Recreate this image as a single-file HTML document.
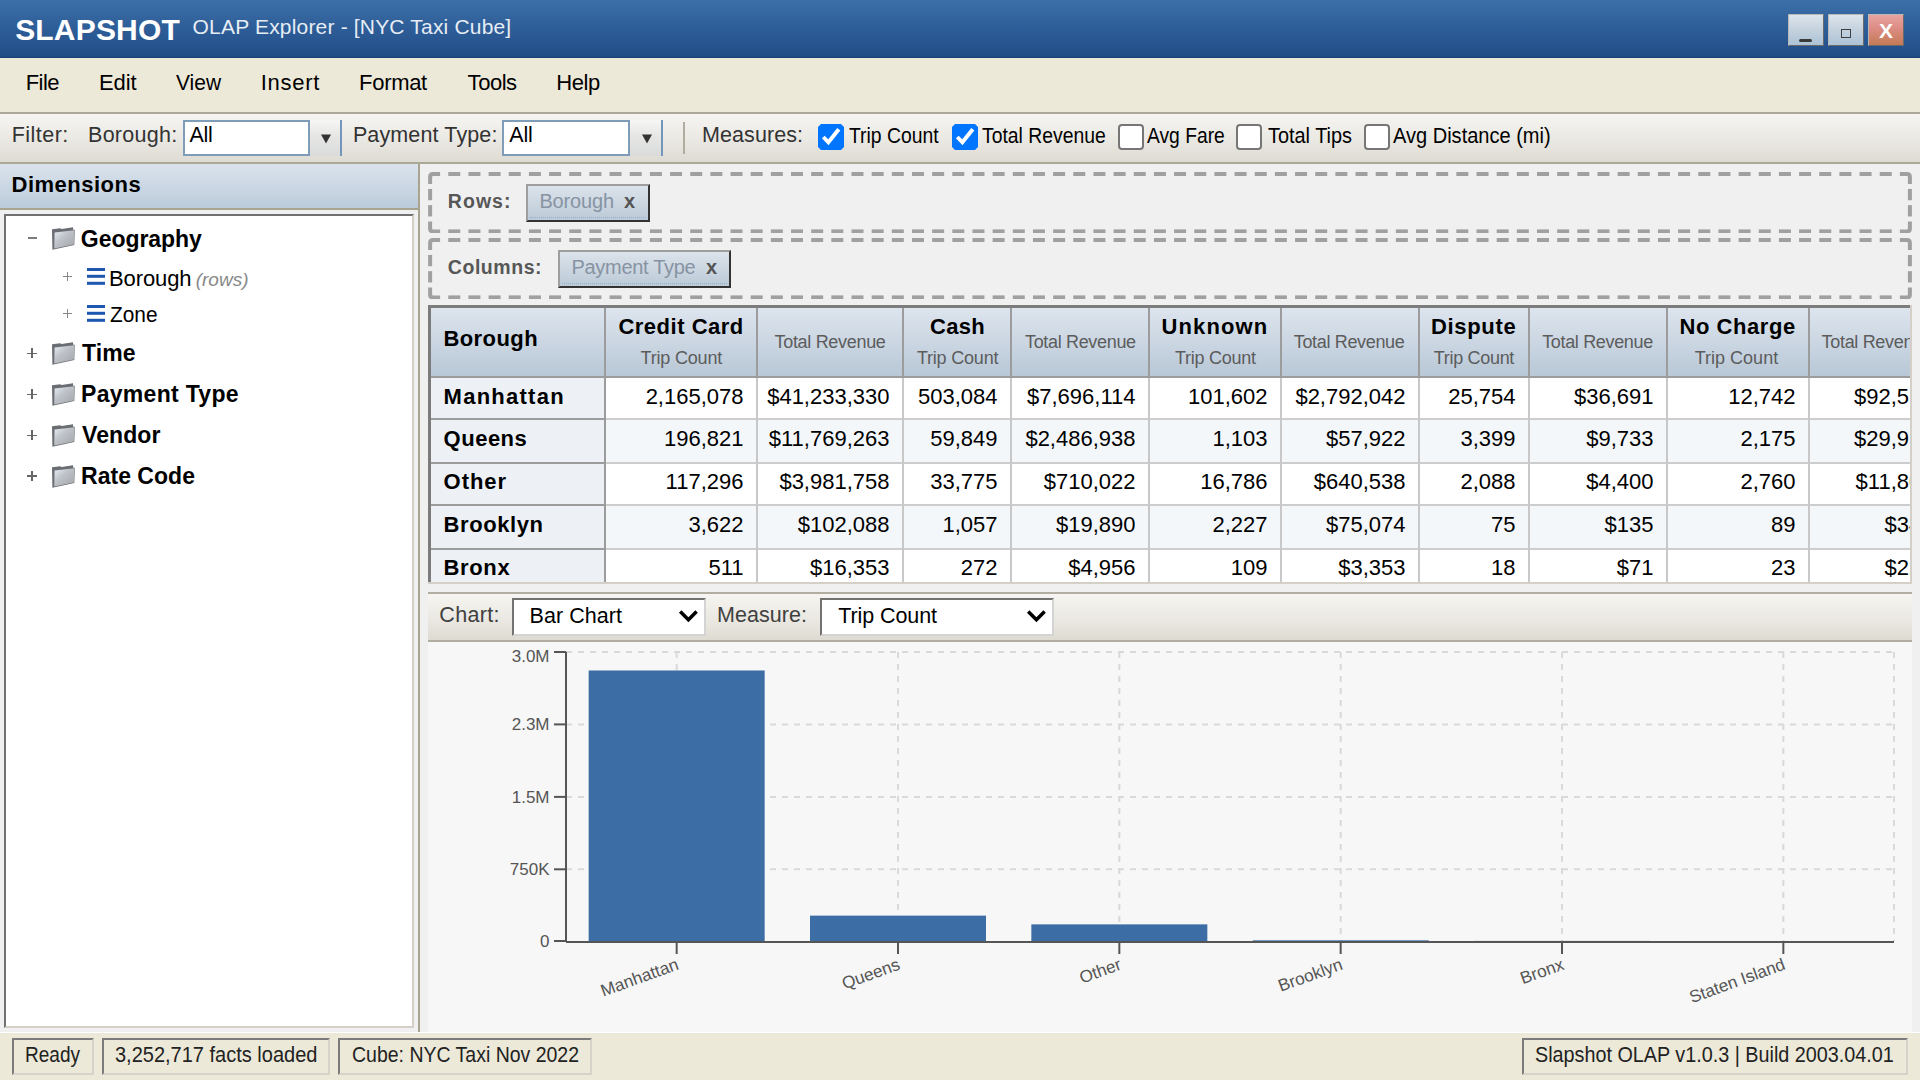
<!DOCTYPE html><html><head><meta charset="utf-8"><style>
html,body{margin:0;padding:0;width:1920px;height:1080px;overflow:hidden;background:#ece9d8;font-family:"Liberation Sans",sans-serif;}
.a{position:absolute;}
.t{position:absolute;line-height:1;white-space:nowrap;}
</style></head><body>
<div class="a" style="left:0px;top:0px;width:1920px;height:58px;background:linear-gradient(#3c6fa7,#2c5b96 55%,#204c85);"></div>
<div class="a" style="left:0px;top:57px;width:1920px;height:1px;background:#1a4175;"></div>
<div class="t" style="left:15.20px;top:15.00px;font-size:30px;color:#fff;font-weight:bold;letter-spacing:0.171px;">SLAPSHOT</div>
<div class="t" style="left:192.60px;top:16.00px;font-size:21px;color:#e6edf5;font-weight:normal;letter-spacing:0.18px;">OLAP Explorer - [NYC Taxi Cube]</div>
<div class="a" style="left:1788px;top:14px;width:36px;height:32px;background:linear-gradient(#dce4ec,#c6d3df 45%,#adc3d6);border:1px solid;border-color:#b8b8b8 #6a6a6a #6a6a6a #b8b8b8;box-sizing:border-box;"></div>
<div class="a" style="left:1828px;top:14px;width:36px;height:32px;background:linear-gradient(#dce4ec,#c6d3df 45%,#adc3d6);border:1px solid;border-color:#b8b8b8 #6a6a6a #6a6a6a #b8b8b8;box-sizing:border-box;"></div>
<div class="a" style="left:1868px;top:14px;width:36px;height:32px;background:linear-gradient(#e9a3a0,#dc8c84 45%,#c47a55);border:1px solid;border-color:#b8b8b8 #6a6a6a #6a6a6a #b8b8b8;box-sizing:border-box;"></div>
<div class="a" style="left:1799px;top:38.5px;width:13px;height:3px;background:#3a3a3a;border-radius:1.5px;"></div>
<div class="a" style="left:1841px;top:28.5px;width:10px;height:9.5px;border:1.6px solid #404040;box-sizing:border-box;"></div>
<div class="t" style="left:1586px;width:600px;text-align:center;top:20.00px;font-size:21px;color:#fff;font-weight:bold;">X</div>
<div class="a" style="left:0px;top:58px;width:1920px;height:54px;background:#ece9d8;"></div>
<div class="a" style="left:0px;top:112px;width:1920px;height:2px;background:#aca899;"></div>
<div class="t" style="left:25.70px;top:72.00px;font-size:22px;color:#000;font-weight:normal;letter-spacing:-0.567px;">File</div>
<div class="t" style="left:99.00px;top:72.00px;font-size:22px;color:#000;font-weight:normal;letter-spacing:-0.1px;">Edit</div>
<div class="t" style="left:176.00px;top:72.00px;font-size:22px;color:#000;font-weight:normal;letter-spacing:0px;transform:scaleX(0.9521);transform-origin:0 0;">View</div>
<div class="t" style="left:260.80px;top:72.00px;font-size:22px;color:#000;font-weight:normal;letter-spacing:0.7px;">Insert</div>
<div class="t" style="left:359.10px;top:72.00px;font-size:22px;color:#000;font-weight:normal;letter-spacing:-0.32px;">Format</div>
<div class="t" style="left:467.60px;top:72.00px;font-size:22px;color:#000;font-weight:normal;letter-spacing:-0.463px;">Tools</div>
<div class="t" style="left:556.30px;top:72.00px;font-size:22px;color:#000;font-weight:normal;letter-spacing:-0.467px;">Help</div>
<div class="a" style="left:0px;top:114px;width:1920px;height:48px;background:linear-gradient(#f6f5f2,#eae8e2 55%,#dedbd3);"></div>
<div class="a" style="left:0px;top:162px;width:1920px;height:2px;background:#aca899;"></div>
<div class="t" style="left:11.70px;top:125.00px;font-size:21.5px;color:#333;font-weight:normal;letter-spacing:0.467px;">Filter:</div>
<div class="t" style="left:88.00px;top:125.00px;font-size:21.5px;color:#333;font-weight:normal;letter-spacing:0.286px;">Borough:</div>
<div class="a" style="left:183px;top:120px;width:127px;height:36px;background:#fff;border:2px solid #7f9db9;box-sizing:border-box;"></div>
<div class="a" style="left:310px;top:120px;width:32px;height:36px;background:linear-gradient(#f6f6f4,#e6e6e4 45%,#d9dcdb);"></div>
<div class="a" style="left:340px;top:120px;width:2px;height:36px;background:#7496bb;"></div>
<div class="t" style="left:189.40px;top:125.00px;font-size:21.5px;color:#000;font-weight:normal;letter-spacing:-0.2px;">All</div>
<svg class="a" style="left:321.0px;top:134px" width="10" height="10"><path d="M0 0.5 H10 L5 9.5 Z" fill="#333"/></svg>
<div class="t" style="left:352.90px;top:125.00px;font-size:21.5px;color:#333;font-weight:normal;letter-spacing:0.125px;">Payment Type:</div>
<div class="a" style="left:502px;top:120px;width:128px;height:36px;background:#fff;border:2px solid #7f9db9;box-sizing:border-box;"></div>
<div class="a" style="left:630px;top:120px;width:33px;height:36px;background:linear-gradient(#f6f6f4,#e6e6e4 45%,#d9dcdb);"></div>
<div class="a" style="left:661px;top:120px;width:2px;height:36px;background:#7496bb;"></div>
<div class="t" style="left:509.30px;top:125.00px;font-size:21.5px;color:#000;font-weight:normal;letter-spacing:-0.2px;">All</div>
<svg class="a" style="left:641.5px;top:134px" width="10" height="10"><path d="M0 0.5 H10 L5 9.5 Z" fill="#333"/></svg>
<div class="a" style="left:683px;top:122px;width:2px;height:32px;background:#b0aca0;"></div>
<div class="t" style="left:702.00px;top:125.00px;font-size:21.5px;color:#333;font-weight:normal;letter-spacing:0.088px;">Measures:</div>
<svg class="a" style="left:818px;top:124px" width="26" height="26" viewBox="0 0 26 26"><path d="M3 0 H23 L26 3 V23 L23 26 H3 L0 23 V3 Z" fill="#0075ff"/><path d="M5.3 13 L10.4 18.3 L20.8 5.3" fill="none" stroke="#fff" stroke-width="3.9"/></svg>
<div class="t" style="left:849.00px;top:126.00px;font-size:21.5px;color:#000;font-weight:normal;letter-spacing:0px;transform:scaleX(0.9000);transform-origin:0 0;">Trip Count</div>
<svg class="a" style="left:952px;top:124px" width="26" height="26" viewBox="0 0 26 26"><path d="M3 0 H23 L26 3 V23 L23 26 H3 L0 23 V3 Z" fill="#0075ff"/><path d="M5.3 13 L10.4 18.3 L20.8 5.3" fill="none" stroke="#fff" stroke-width="3.9"/></svg>
<div class="t" style="left:981.70px;top:126.00px;font-size:21.5px;color:#000;font-weight:normal;letter-spacing:0px;transform:scaleX(0.9000);transform-origin:0 0;">Total Revenue</div>
<div class="a" style="left:1118px;top:124px;width:26px;height:26px;background:#fff;border:2px solid #767676;border-radius:4px;box-sizing:border-box;"></div>
<div class="t" style="left:1147.00px;top:126.00px;font-size:21.5px;color:#000;font-weight:normal;letter-spacing:0px;transform:scaleX(0.8953);transform-origin:0 0;">Avg Fare</div>
<div class="a" style="left:1236px;top:124px;width:26px;height:26px;background:#fff;border:2px solid #767676;border-radius:4px;box-sizing:border-box;"></div>
<div class="t" style="left:1267.50px;top:126.00px;font-size:21.5px;color:#000;font-weight:normal;letter-spacing:0px;transform:scaleX(0.9244);transform-origin:0 0;">Total Tips</div>
<div class="a" style="left:1364px;top:124px;width:26px;height:26px;background:#fff;border:2px solid #767676;border-radius:4px;box-sizing:border-box;"></div>
<div class="t" style="left:1393.00px;top:126.00px;font-size:21.5px;color:#000;font-weight:normal;letter-spacing:0px;transform:scaleX(0.9315);transform-origin:0 0;">Avg Distance (mi)</div>
<div class="a" style="left:0px;top:164px;width:418px;height:868px;background:#f0f0f0;"></div>
<div class="a" style="left:0px;top:164px;width:418px;height:44px;background:linear-gradient(#dae3ed,#bccbda);"></div>
<div class="a" style="left:0px;top:208px;width:418px;height:2px;background:#a8a490;"></div>
<div class="t" style="left:11.60px;top:174.00px;font-size:22px;color:#000;font-weight:bold;letter-spacing:0.489px;">Dimensions</div>
<div class="a" style="left:4px;top:214px;width:410px;height:814px;background:#fff;border:2px solid;border-color:#727070 #d4d0c8 #d4d0c8 #727070;box-sizing:border-box;"></div>
<div class="a" style="left:418px;top:164px;width:2px;height:868px;background:#a8a490;"></div>
<svg width="0" height="0" style="position:absolute"><defs><linearGradient id="fg" x1="0" y1="0" x2="1" y2="1"><stop offset="0" stop-color="#e8eef6"/><stop offset="0.4" stop-color="#c0c4ca"/><stop offset="1" stop-color="#a2a4a8"/></linearGradient></defs></svg>
<div class="a" style="left:27.5px;top:237px;width:9px;height:2px;background:#7c7c7c;"></div>
<svg class="a" style="left:51px;top:226px" width="24" height="24" viewBox="0 0 24 24"><path d="M1 3.2 L9.2 2.2 L10.6 3.1 L22 1.2 L22.2 3.7 L23.8 3.7 L23.3 18.9 L1.4 23.8 Z" fill="#6a6d72"/><path d="M3.6 6.6 L23.4 4.2 L22.9 18.4 L3.2 22.4 Z" fill="url(#fg)"/></svg>
<div class="t" style="left:80.80px;top:228.00px;font-size:23px;color:#000;font-weight:bold;letter-spacing:-0.05px;">Geography</div>
<div class="a" style="left:63px;top:275.85px;width:9px;height:1.3px;background:#888;"></div>
<div class="a" style="left:66.85px;top:272px;width:1.3px;height:9px;background:#888;"></div>
<svg class="a" style="left:87px;top:268px" width="19" height="17"><rect x="0" y="0" width="18" height="3" fill="#1d57b0"/><rect x="0" y="6.8" width="18" height="3" fill="#1d57b0"/><rect x="0" y="13.8" width="18" height="3" fill="#1d57b0"/></svg>
<div class="t" style="left:109.00px;top:268.00px;font-size:22px;color:#000;font-weight:normal;letter-spacing:-0.1px;">Borough</div>
<div class="t" style="left:195.70px;top:270.00px;font-size:19px;color:#888;font-weight:normal;letter-spacing:0px;font-style:italic">(rows)</div>
<div class="a" style="left:63px;top:312.85px;width:9px;height:1.3px;background:#888;"></div>
<div class="a" style="left:66.85px;top:309px;width:1.3px;height:9px;background:#888;"></div>
<svg class="a" style="left:87px;top:305px" width="19" height="17"><rect x="0" y="0" width="18" height="3" fill="#1d57b0"/><rect x="0" y="6.8" width="18" height="3" fill="#1d57b0"/><rect x="0" y="13.8" width="18" height="3" fill="#1d57b0"/></svg>
<div class="t" style="left:110.00px;top:304.00px;font-size:22px;color:#000;font-weight:normal;letter-spacing:0px;transform:scaleX(0.9480);transform-origin:0 0;">Zone</div>
<div class="a" style="left:27px;top:352.59999999999997px;width:10px;height:1.6px;background:#666;"></div>
<div class="a" style="left:31.2px;top:348.4px;width:1.6px;height:10px;background:#666;"></div>
<svg class="a" style="left:51px;top:341.4px" width="24" height="24" viewBox="0 0 24 24"><path d="M1 3.2 L9.2 2.2 L10.6 3.1 L22 1.2 L22.2 3.7 L23.8 3.7 L23.3 18.9 L1.4 23.8 Z" fill="#6a6d72"/><path d="M3.6 6.6 L23.4 4.2 L22.9 18.4 L3.2 22.4 Z" fill="url(#fg)"/></svg>
<div class="t" style="left:82.00px;top:342.00px;font-size:23px;color:#000;font-weight:bold;letter-spacing:0.1px;">Time</div>
<div class="a" style="left:27px;top:393.59999999999997px;width:10px;height:1.6px;background:#666;"></div>
<div class="a" style="left:31.2px;top:389.4px;width:1.6px;height:10px;background:#666;"></div>
<svg class="a" style="left:51px;top:382.4px" width="24" height="24" viewBox="0 0 24 24"><path d="M1 3.2 L9.2 2.2 L10.6 3.1 L22 1.2 L22.2 3.7 L23.8 3.7 L23.3 18.9 L1.4 23.8 Z" fill="#6a6d72"/><path d="M3.6 6.6 L23.4 4.2 L22.9 18.4 L3.2 22.4 Z" fill="url(#fg)"/></svg>
<div class="t" style="left:81.00px;top:383.00px;font-size:23px;color:#000;font-weight:bold;letter-spacing:0.3px;">Payment Type</div>
<div class="a" style="left:27px;top:434.5px;width:10px;height:1.6px;background:#666;"></div>
<div class="a" style="left:31.2px;top:430.3px;width:1.6px;height:10px;background:#666;"></div>
<svg class="a" style="left:51px;top:423.3px" width="24" height="24" viewBox="0 0 24 24"><path d="M1 3.2 L9.2 2.2 L10.6 3.1 L22 1.2 L22.2 3.7 L23.8 3.7 L23.3 18.9 L1.4 23.8 Z" fill="#6a6d72"/><path d="M3.6 6.6 L23.4 4.2 L22.9 18.4 L3.2 22.4 Z" fill="url(#fg)"/></svg>
<div class="t" style="left:82.00px;top:424.00px;font-size:23px;color:#000;font-weight:bold;letter-spacing:0.1px;">Vendor</div>
<div class="a" style="left:27px;top:475.4px;width:10px;height:1.6px;background:#666;"></div>
<div class="a" style="left:31.2px;top:471.2px;width:1.6px;height:10px;background:#666;"></div>
<svg class="a" style="left:51px;top:464.2px" width="24" height="24" viewBox="0 0 24 24"><path d="M1 3.2 L9.2 2.2 L10.6 3.1 L22 1.2 L22.2 3.7 L23.8 3.7 L23.3 18.9 L1.4 23.8 Z" fill="#6a6d72"/><path d="M3.6 6.6 L23.4 4.2 L22.9 18.4 L3.2 22.4 Z" fill="url(#fg)"/></svg>
<div class="t" style="left:81.00px;top:465.00px;font-size:23px;color:#000;font-weight:bold;letter-spacing:0.025px;">Rate Code</div>
<div class="a" style="left:420px;top:164px;width:1500px;height:868px;background:#f0f0f0;"></div>
<svg class="a" style="left:428px;top:172px" width="1484" height="61.4" viewBox="0 0 1484 61.4"><path d="M2.0 12 V5.0 Q2.0 2.0 5 2.0 H12" fill="none" stroke="#a0a0a0" stroke-width="4"/><path d="M1472 2.0 H1479 Q1482.0 2.0 1482.0 5 V12" fill="none" stroke="#a0a0a0" stroke-width="4"/><path d="M1482.0 49.4 V56.4 Q1482.0 59.4 1479 59.4 H1472" fill="none" stroke="#a0a0a0" stroke-width="4"/><path d="M12 59.4 H5 Q2.0 59.4 2.0 56.4 V49.4" fill="none" stroke="#a0a0a0" stroke-width="4"/><rect x="20.16" y="0" width="12" height="4" fill="#a0a0a0"/><rect x="20.16" y="57.4" width="12" height="4" fill="#a0a0a0"/><rect x="40.33" y="0" width="12" height="4" fill="#a0a0a0"/><rect x="40.33" y="57.4" width="12" height="4" fill="#a0a0a0"/><rect x="60.49" y="0" width="12" height="4" fill="#a0a0a0"/><rect x="60.49" y="57.4" width="12" height="4" fill="#a0a0a0"/><rect x="80.66" y="0" width="12" height="4" fill="#a0a0a0"/><rect x="80.66" y="57.4" width="12" height="4" fill="#a0a0a0"/><rect x="100.82" y="0" width="12" height="4" fill="#a0a0a0"/><rect x="100.82" y="57.4" width="12" height="4" fill="#a0a0a0"/><rect x="120.99" y="0" width="12" height="4" fill="#a0a0a0"/><rect x="120.99" y="57.4" width="12" height="4" fill="#a0a0a0"/><rect x="141.15" y="0" width="12" height="4" fill="#a0a0a0"/><rect x="141.15" y="57.4" width="12" height="4" fill="#a0a0a0"/><rect x="161.32" y="0" width="12" height="4" fill="#a0a0a0"/><rect x="161.32" y="57.4" width="12" height="4" fill="#a0a0a0"/><rect x="181.48" y="0" width="12" height="4" fill="#a0a0a0"/><rect x="181.48" y="57.4" width="12" height="4" fill="#a0a0a0"/><rect x="201.64" y="0" width="12" height="4" fill="#a0a0a0"/><rect x="201.64" y="57.4" width="12" height="4" fill="#a0a0a0"/><rect x="221.81" y="0" width="12" height="4" fill="#a0a0a0"/><rect x="221.81" y="57.4" width="12" height="4" fill="#a0a0a0"/><rect x="241.97" y="0" width="12" height="4" fill="#a0a0a0"/><rect x="241.97" y="57.4" width="12" height="4" fill="#a0a0a0"/><rect x="262.14" y="0" width="12" height="4" fill="#a0a0a0"/><rect x="262.14" y="57.4" width="12" height="4" fill="#a0a0a0"/><rect x="282.30" y="0" width="12" height="4" fill="#a0a0a0"/><rect x="282.30" y="57.4" width="12" height="4" fill="#a0a0a0"/><rect x="302.47" y="0" width="12" height="4" fill="#a0a0a0"/><rect x="302.47" y="57.4" width="12" height="4" fill="#a0a0a0"/><rect x="322.63" y="0" width="12" height="4" fill="#a0a0a0"/><rect x="322.63" y="57.4" width="12" height="4" fill="#a0a0a0"/><rect x="342.79" y="0" width="12" height="4" fill="#a0a0a0"/><rect x="342.79" y="57.4" width="12" height="4" fill="#a0a0a0"/><rect x="362.96" y="0" width="12" height="4" fill="#a0a0a0"/><rect x="362.96" y="57.4" width="12" height="4" fill="#a0a0a0"/><rect x="383.12" y="0" width="12" height="4" fill="#a0a0a0"/><rect x="383.12" y="57.4" width="12" height="4" fill="#a0a0a0"/><rect x="403.29" y="0" width="12" height="4" fill="#a0a0a0"/><rect x="403.29" y="57.4" width="12" height="4" fill="#a0a0a0"/><rect x="423.45" y="0" width="12" height="4" fill="#a0a0a0"/><rect x="423.45" y="57.4" width="12" height="4" fill="#a0a0a0"/><rect x="443.62" y="0" width="12" height="4" fill="#a0a0a0"/><rect x="443.62" y="57.4" width="12" height="4" fill="#a0a0a0"/><rect x="463.78" y="0" width="12" height="4" fill="#a0a0a0"/><rect x="463.78" y="57.4" width="12" height="4" fill="#a0a0a0"/><rect x="483.95" y="0" width="12" height="4" fill="#a0a0a0"/><rect x="483.95" y="57.4" width="12" height="4" fill="#a0a0a0"/><rect x="504.11" y="0" width="12" height="4" fill="#a0a0a0"/><rect x="504.11" y="57.4" width="12" height="4" fill="#a0a0a0"/><rect x="524.27" y="0" width="12" height="4" fill="#a0a0a0"/><rect x="524.27" y="57.4" width="12" height="4" fill="#a0a0a0"/><rect x="544.44" y="0" width="12" height="4" fill="#a0a0a0"/><rect x="544.44" y="57.4" width="12" height="4" fill="#a0a0a0"/><rect x="564.60" y="0" width="12" height="4" fill="#a0a0a0"/><rect x="564.60" y="57.4" width="12" height="4" fill="#a0a0a0"/><rect x="584.77" y="0" width="12" height="4" fill="#a0a0a0"/><rect x="584.77" y="57.4" width="12" height="4" fill="#a0a0a0"/><rect x="604.93" y="0" width="12" height="4" fill="#a0a0a0"/><rect x="604.93" y="57.4" width="12" height="4" fill="#a0a0a0"/><rect x="625.10" y="0" width="12" height="4" fill="#a0a0a0"/><rect x="625.10" y="57.4" width="12" height="4" fill="#a0a0a0"/><rect x="645.26" y="0" width="12" height="4" fill="#a0a0a0"/><rect x="645.26" y="57.4" width="12" height="4" fill="#a0a0a0"/><rect x="665.42" y="0" width="12" height="4" fill="#a0a0a0"/><rect x="665.42" y="57.4" width="12" height="4" fill="#a0a0a0"/><rect x="685.59" y="0" width="12" height="4" fill="#a0a0a0"/><rect x="685.59" y="57.4" width="12" height="4" fill="#a0a0a0"/><rect x="705.75" y="0" width="12" height="4" fill="#a0a0a0"/><rect x="705.75" y="57.4" width="12" height="4" fill="#a0a0a0"/><rect x="725.92" y="0" width="12" height="4" fill="#a0a0a0"/><rect x="725.92" y="57.4" width="12" height="4" fill="#a0a0a0"/><rect x="746.08" y="0" width="12" height="4" fill="#a0a0a0"/><rect x="746.08" y="57.4" width="12" height="4" fill="#a0a0a0"/><rect x="766.25" y="0" width="12" height="4" fill="#a0a0a0"/><rect x="766.25" y="57.4" width="12" height="4" fill="#a0a0a0"/><rect x="786.41" y="0" width="12" height="4" fill="#a0a0a0"/><rect x="786.41" y="57.4" width="12" height="4" fill="#a0a0a0"/><rect x="806.58" y="0" width="12" height="4" fill="#a0a0a0"/><rect x="806.58" y="57.4" width="12" height="4" fill="#a0a0a0"/><rect x="826.74" y="0" width="12" height="4" fill="#a0a0a0"/><rect x="826.74" y="57.4" width="12" height="4" fill="#a0a0a0"/><rect x="846.90" y="0" width="12" height="4" fill="#a0a0a0"/><rect x="846.90" y="57.4" width="12" height="4" fill="#a0a0a0"/><rect x="867.07" y="0" width="12" height="4" fill="#a0a0a0"/><rect x="867.07" y="57.4" width="12" height="4" fill="#a0a0a0"/><rect x="887.23" y="0" width="12" height="4" fill="#a0a0a0"/><rect x="887.23" y="57.4" width="12" height="4" fill="#a0a0a0"/><rect x="907.40" y="0" width="12" height="4" fill="#a0a0a0"/><rect x="907.40" y="57.4" width="12" height="4" fill="#a0a0a0"/><rect x="927.56" y="0" width="12" height="4" fill="#a0a0a0"/><rect x="927.56" y="57.4" width="12" height="4" fill="#a0a0a0"/><rect x="947.73" y="0" width="12" height="4" fill="#a0a0a0"/><rect x="947.73" y="57.4" width="12" height="4" fill="#a0a0a0"/><rect x="967.89" y="0" width="12" height="4" fill="#a0a0a0"/><rect x="967.89" y="57.4" width="12" height="4" fill="#a0a0a0"/><rect x="988.05" y="0" width="12" height="4" fill="#a0a0a0"/><rect x="988.05" y="57.4" width="12" height="4" fill="#a0a0a0"/><rect x="1008.22" y="0" width="12" height="4" fill="#a0a0a0"/><rect x="1008.22" y="57.4" width="12" height="4" fill="#a0a0a0"/><rect x="1028.38" y="0" width="12" height="4" fill="#a0a0a0"/><rect x="1028.38" y="57.4" width="12" height="4" fill="#a0a0a0"/><rect x="1048.55" y="0" width="12" height="4" fill="#a0a0a0"/><rect x="1048.55" y="57.4" width="12" height="4" fill="#a0a0a0"/><rect x="1068.71" y="0" width="12" height="4" fill="#a0a0a0"/><rect x="1068.71" y="57.4" width="12" height="4" fill="#a0a0a0"/><rect x="1088.88" y="0" width="12" height="4" fill="#a0a0a0"/><rect x="1088.88" y="57.4" width="12" height="4" fill="#a0a0a0"/><rect x="1109.04" y="0" width="12" height="4" fill="#a0a0a0"/><rect x="1109.04" y="57.4" width="12" height="4" fill="#a0a0a0"/><rect x="1129.21" y="0" width="12" height="4" fill="#a0a0a0"/><rect x="1129.21" y="57.4" width="12" height="4" fill="#a0a0a0"/><rect x="1149.37" y="0" width="12" height="4" fill="#a0a0a0"/><rect x="1149.37" y="57.4" width="12" height="4" fill="#a0a0a0"/><rect x="1169.53" y="0" width="12" height="4" fill="#a0a0a0"/><rect x="1169.53" y="57.4" width="12" height="4" fill="#a0a0a0"/><rect x="1189.70" y="0" width="12" height="4" fill="#a0a0a0"/><rect x="1189.70" y="57.4" width="12" height="4" fill="#a0a0a0"/><rect x="1209.86" y="0" width="12" height="4" fill="#a0a0a0"/><rect x="1209.86" y="57.4" width="12" height="4" fill="#a0a0a0"/><rect x="1230.03" y="0" width="12" height="4" fill="#a0a0a0"/><rect x="1230.03" y="57.4" width="12" height="4" fill="#a0a0a0"/><rect x="1250.19" y="0" width="12" height="4" fill="#a0a0a0"/><rect x="1250.19" y="57.4" width="12" height="4" fill="#a0a0a0"/><rect x="1270.36" y="0" width="12" height="4" fill="#a0a0a0"/><rect x="1270.36" y="57.4" width="12" height="4" fill="#a0a0a0"/><rect x="1290.52" y="0" width="12" height="4" fill="#a0a0a0"/><rect x="1290.52" y="57.4" width="12" height="4" fill="#a0a0a0"/><rect x="1310.68" y="0" width="12" height="4" fill="#a0a0a0"/><rect x="1310.68" y="57.4" width="12" height="4" fill="#a0a0a0"/><rect x="1330.85" y="0" width="12" height="4" fill="#a0a0a0"/><rect x="1330.85" y="57.4" width="12" height="4" fill="#a0a0a0"/><rect x="1351.01" y="0" width="12" height="4" fill="#a0a0a0"/><rect x="1351.01" y="57.4" width="12" height="4" fill="#a0a0a0"/><rect x="1371.18" y="0" width="12" height="4" fill="#a0a0a0"/><rect x="1371.18" y="57.4" width="12" height="4" fill="#a0a0a0"/><rect x="1391.34" y="0" width="12" height="4" fill="#a0a0a0"/><rect x="1391.34" y="57.4" width="12" height="4" fill="#a0a0a0"/><rect x="1411.51" y="0" width="12" height="4" fill="#a0a0a0"/><rect x="1411.51" y="57.4" width="12" height="4" fill="#a0a0a0"/><rect x="1431.67" y="0" width="12" height="4" fill="#a0a0a0"/><rect x="1431.67" y="57.4" width="12" height="4" fill="#a0a0a0"/><rect x="1451.84" y="0" width="12" height="4" fill="#a0a0a0"/><rect x="1451.84" y="57.4" width="12" height="4" fill="#a0a0a0"/><rect x="0" y="16.93" width="4" height="11.3" fill="#a0a0a0"/><rect x="1480" y="16.93" width="4" height="11.3" fill="#a0a0a0"/><rect x="0" y="33.17" width="4" height="11.3" fill="#a0a0a0"/><rect x="1480" y="33.17" width="4" height="11.3" fill="#a0a0a0"/></svg>
<div class="t" style="left:447.80px;top:192.00px;font-size:19.5px;color:#575757;font-weight:bold;letter-spacing:1.05px;">Rows:</div>
<div class="a" style="left:526.3px;top:184.4px;width:123.5px;height:38px;background:linear-gradient(#dbe3eb,#bccad7);border:2px solid;border-color:#9e9e9e #333 #333 #9e9e9e;box-sizing:border-box;"></div>
<div class="a" style="left:530.3px;top:216.9px;width:115.5px;height:0;border-top:1px dotted #8fb0d0;"></div>
<div class="t" style="left:539.40px;top:191.00px;font-size:20px;color:#8793a2;font-weight:normal;letter-spacing:-0.167px;">Borough</div>
<div class="t" style="left:624.00px;top:191.00px;font-size:20px;color:#555;font-weight:bold;letter-spacing:0px;">x</div>
<svg class="a" style="left:428px;top:238px" width="1484" height="61.4" viewBox="0 0 1484 61.4"><path d="M2.0 12 V5.0 Q2.0 2.0 5 2.0 H12" fill="none" stroke="#a0a0a0" stroke-width="4"/><path d="M1472 2.0 H1479 Q1482.0 2.0 1482.0 5 V12" fill="none" stroke="#a0a0a0" stroke-width="4"/><path d="M1482.0 49.4 V56.4 Q1482.0 59.4 1479 59.4 H1472" fill="none" stroke="#a0a0a0" stroke-width="4"/><path d="M12 59.4 H5 Q2.0 59.4 2.0 56.4 V49.4" fill="none" stroke="#a0a0a0" stroke-width="4"/><rect x="20.16" y="0" width="12" height="4" fill="#a0a0a0"/><rect x="20.16" y="57.4" width="12" height="4" fill="#a0a0a0"/><rect x="40.33" y="0" width="12" height="4" fill="#a0a0a0"/><rect x="40.33" y="57.4" width="12" height="4" fill="#a0a0a0"/><rect x="60.49" y="0" width="12" height="4" fill="#a0a0a0"/><rect x="60.49" y="57.4" width="12" height="4" fill="#a0a0a0"/><rect x="80.66" y="0" width="12" height="4" fill="#a0a0a0"/><rect x="80.66" y="57.4" width="12" height="4" fill="#a0a0a0"/><rect x="100.82" y="0" width="12" height="4" fill="#a0a0a0"/><rect x="100.82" y="57.4" width="12" height="4" fill="#a0a0a0"/><rect x="120.99" y="0" width="12" height="4" fill="#a0a0a0"/><rect x="120.99" y="57.4" width="12" height="4" fill="#a0a0a0"/><rect x="141.15" y="0" width="12" height="4" fill="#a0a0a0"/><rect x="141.15" y="57.4" width="12" height="4" fill="#a0a0a0"/><rect x="161.32" y="0" width="12" height="4" fill="#a0a0a0"/><rect x="161.32" y="57.4" width="12" height="4" fill="#a0a0a0"/><rect x="181.48" y="0" width="12" height="4" fill="#a0a0a0"/><rect x="181.48" y="57.4" width="12" height="4" fill="#a0a0a0"/><rect x="201.64" y="0" width="12" height="4" fill="#a0a0a0"/><rect x="201.64" y="57.4" width="12" height="4" fill="#a0a0a0"/><rect x="221.81" y="0" width="12" height="4" fill="#a0a0a0"/><rect x="221.81" y="57.4" width="12" height="4" fill="#a0a0a0"/><rect x="241.97" y="0" width="12" height="4" fill="#a0a0a0"/><rect x="241.97" y="57.4" width="12" height="4" fill="#a0a0a0"/><rect x="262.14" y="0" width="12" height="4" fill="#a0a0a0"/><rect x="262.14" y="57.4" width="12" height="4" fill="#a0a0a0"/><rect x="282.30" y="0" width="12" height="4" fill="#a0a0a0"/><rect x="282.30" y="57.4" width="12" height="4" fill="#a0a0a0"/><rect x="302.47" y="0" width="12" height="4" fill="#a0a0a0"/><rect x="302.47" y="57.4" width="12" height="4" fill="#a0a0a0"/><rect x="322.63" y="0" width="12" height="4" fill="#a0a0a0"/><rect x="322.63" y="57.4" width="12" height="4" fill="#a0a0a0"/><rect x="342.79" y="0" width="12" height="4" fill="#a0a0a0"/><rect x="342.79" y="57.4" width="12" height="4" fill="#a0a0a0"/><rect x="362.96" y="0" width="12" height="4" fill="#a0a0a0"/><rect x="362.96" y="57.4" width="12" height="4" fill="#a0a0a0"/><rect x="383.12" y="0" width="12" height="4" fill="#a0a0a0"/><rect x="383.12" y="57.4" width="12" height="4" fill="#a0a0a0"/><rect x="403.29" y="0" width="12" height="4" fill="#a0a0a0"/><rect x="403.29" y="57.4" width="12" height="4" fill="#a0a0a0"/><rect x="423.45" y="0" width="12" height="4" fill="#a0a0a0"/><rect x="423.45" y="57.4" width="12" height="4" fill="#a0a0a0"/><rect x="443.62" y="0" width="12" height="4" fill="#a0a0a0"/><rect x="443.62" y="57.4" width="12" height="4" fill="#a0a0a0"/><rect x="463.78" y="0" width="12" height="4" fill="#a0a0a0"/><rect x="463.78" y="57.4" width="12" height="4" fill="#a0a0a0"/><rect x="483.95" y="0" width="12" height="4" fill="#a0a0a0"/><rect x="483.95" y="57.4" width="12" height="4" fill="#a0a0a0"/><rect x="504.11" y="0" width="12" height="4" fill="#a0a0a0"/><rect x="504.11" y="57.4" width="12" height="4" fill="#a0a0a0"/><rect x="524.27" y="0" width="12" height="4" fill="#a0a0a0"/><rect x="524.27" y="57.4" width="12" height="4" fill="#a0a0a0"/><rect x="544.44" y="0" width="12" height="4" fill="#a0a0a0"/><rect x="544.44" y="57.4" width="12" height="4" fill="#a0a0a0"/><rect x="564.60" y="0" width="12" height="4" fill="#a0a0a0"/><rect x="564.60" y="57.4" width="12" height="4" fill="#a0a0a0"/><rect x="584.77" y="0" width="12" height="4" fill="#a0a0a0"/><rect x="584.77" y="57.4" width="12" height="4" fill="#a0a0a0"/><rect x="604.93" y="0" width="12" height="4" fill="#a0a0a0"/><rect x="604.93" y="57.4" width="12" height="4" fill="#a0a0a0"/><rect x="625.10" y="0" width="12" height="4" fill="#a0a0a0"/><rect x="625.10" y="57.4" width="12" height="4" fill="#a0a0a0"/><rect x="645.26" y="0" width="12" height="4" fill="#a0a0a0"/><rect x="645.26" y="57.4" width="12" height="4" fill="#a0a0a0"/><rect x="665.42" y="0" width="12" height="4" fill="#a0a0a0"/><rect x="665.42" y="57.4" width="12" height="4" fill="#a0a0a0"/><rect x="685.59" y="0" width="12" height="4" fill="#a0a0a0"/><rect x="685.59" y="57.4" width="12" height="4" fill="#a0a0a0"/><rect x="705.75" y="0" width="12" height="4" fill="#a0a0a0"/><rect x="705.75" y="57.4" width="12" height="4" fill="#a0a0a0"/><rect x="725.92" y="0" width="12" height="4" fill="#a0a0a0"/><rect x="725.92" y="57.4" width="12" height="4" fill="#a0a0a0"/><rect x="746.08" y="0" width="12" height="4" fill="#a0a0a0"/><rect x="746.08" y="57.4" width="12" height="4" fill="#a0a0a0"/><rect x="766.25" y="0" width="12" height="4" fill="#a0a0a0"/><rect x="766.25" y="57.4" width="12" height="4" fill="#a0a0a0"/><rect x="786.41" y="0" width="12" height="4" fill="#a0a0a0"/><rect x="786.41" y="57.4" width="12" height="4" fill="#a0a0a0"/><rect x="806.58" y="0" width="12" height="4" fill="#a0a0a0"/><rect x="806.58" y="57.4" width="12" height="4" fill="#a0a0a0"/><rect x="826.74" y="0" width="12" height="4" fill="#a0a0a0"/><rect x="826.74" y="57.4" width="12" height="4" fill="#a0a0a0"/><rect x="846.90" y="0" width="12" height="4" fill="#a0a0a0"/><rect x="846.90" y="57.4" width="12" height="4" fill="#a0a0a0"/><rect x="867.07" y="0" width="12" height="4" fill="#a0a0a0"/><rect x="867.07" y="57.4" width="12" height="4" fill="#a0a0a0"/><rect x="887.23" y="0" width="12" height="4" fill="#a0a0a0"/><rect x="887.23" y="57.4" width="12" height="4" fill="#a0a0a0"/><rect x="907.40" y="0" width="12" height="4" fill="#a0a0a0"/><rect x="907.40" y="57.4" width="12" height="4" fill="#a0a0a0"/><rect x="927.56" y="0" width="12" height="4" fill="#a0a0a0"/><rect x="927.56" y="57.4" width="12" height="4" fill="#a0a0a0"/><rect x="947.73" y="0" width="12" height="4" fill="#a0a0a0"/><rect x="947.73" y="57.4" width="12" height="4" fill="#a0a0a0"/><rect x="967.89" y="0" width="12" height="4" fill="#a0a0a0"/><rect x="967.89" y="57.4" width="12" height="4" fill="#a0a0a0"/><rect x="988.05" y="0" width="12" height="4" fill="#a0a0a0"/><rect x="988.05" y="57.4" width="12" height="4" fill="#a0a0a0"/><rect x="1008.22" y="0" width="12" height="4" fill="#a0a0a0"/><rect x="1008.22" y="57.4" width="12" height="4" fill="#a0a0a0"/><rect x="1028.38" y="0" width="12" height="4" fill="#a0a0a0"/><rect x="1028.38" y="57.4" width="12" height="4" fill="#a0a0a0"/><rect x="1048.55" y="0" width="12" height="4" fill="#a0a0a0"/><rect x="1048.55" y="57.4" width="12" height="4" fill="#a0a0a0"/><rect x="1068.71" y="0" width="12" height="4" fill="#a0a0a0"/><rect x="1068.71" y="57.4" width="12" height="4" fill="#a0a0a0"/><rect x="1088.88" y="0" width="12" height="4" fill="#a0a0a0"/><rect x="1088.88" y="57.4" width="12" height="4" fill="#a0a0a0"/><rect x="1109.04" y="0" width="12" height="4" fill="#a0a0a0"/><rect x="1109.04" y="57.4" width="12" height="4" fill="#a0a0a0"/><rect x="1129.21" y="0" width="12" height="4" fill="#a0a0a0"/><rect x="1129.21" y="57.4" width="12" height="4" fill="#a0a0a0"/><rect x="1149.37" y="0" width="12" height="4" fill="#a0a0a0"/><rect x="1149.37" y="57.4" width="12" height="4" fill="#a0a0a0"/><rect x="1169.53" y="0" width="12" height="4" fill="#a0a0a0"/><rect x="1169.53" y="57.4" width="12" height="4" fill="#a0a0a0"/><rect x="1189.70" y="0" width="12" height="4" fill="#a0a0a0"/><rect x="1189.70" y="57.4" width="12" height="4" fill="#a0a0a0"/><rect x="1209.86" y="0" width="12" height="4" fill="#a0a0a0"/><rect x="1209.86" y="57.4" width="12" height="4" fill="#a0a0a0"/><rect x="1230.03" y="0" width="12" height="4" fill="#a0a0a0"/><rect x="1230.03" y="57.4" width="12" height="4" fill="#a0a0a0"/><rect x="1250.19" y="0" width="12" height="4" fill="#a0a0a0"/><rect x="1250.19" y="57.4" width="12" height="4" fill="#a0a0a0"/><rect x="1270.36" y="0" width="12" height="4" fill="#a0a0a0"/><rect x="1270.36" y="57.4" width="12" height="4" fill="#a0a0a0"/><rect x="1290.52" y="0" width="12" height="4" fill="#a0a0a0"/><rect x="1290.52" y="57.4" width="12" height="4" fill="#a0a0a0"/><rect x="1310.68" y="0" width="12" height="4" fill="#a0a0a0"/><rect x="1310.68" y="57.4" width="12" height="4" fill="#a0a0a0"/><rect x="1330.85" y="0" width="12" height="4" fill="#a0a0a0"/><rect x="1330.85" y="57.4" width="12" height="4" fill="#a0a0a0"/><rect x="1351.01" y="0" width="12" height="4" fill="#a0a0a0"/><rect x="1351.01" y="57.4" width="12" height="4" fill="#a0a0a0"/><rect x="1371.18" y="0" width="12" height="4" fill="#a0a0a0"/><rect x="1371.18" y="57.4" width="12" height="4" fill="#a0a0a0"/><rect x="1391.34" y="0" width="12" height="4" fill="#a0a0a0"/><rect x="1391.34" y="57.4" width="12" height="4" fill="#a0a0a0"/><rect x="1411.51" y="0" width="12" height="4" fill="#a0a0a0"/><rect x="1411.51" y="57.4" width="12" height="4" fill="#a0a0a0"/><rect x="1431.67" y="0" width="12" height="4" fill="#a0a0a0"/><rect x="1431.67" y="57.4" width="12" height="4" fill="#a0a0a0"/><rect x="1451.84" y="0" width="12" height="4" fill="#a0a0a0"/><rect x="1451.84" y="57.4" width="12" height="4" fill="#a0a0a0"/><rect x="0" y="16.93" width="4" height="11.3" fill="#a0a0a0"/><rect x="1480" y="16.93" width="4" height="11.3" fill="#a0a0a0"/><rect x="0" y="33.17" width="4" height="11.3" fill="#a0a0a0"/><rect x="1480" y="33.17" width="4" height="11.3" fill="#a0a0a0"/></svg>
<div class="t" style="left:447.80px;top:258.00px;font-size:19.5px;color:#575757;font-weight:bold;letter-spacing:0.543px;">Columns:</div>
<div class="a" style="left:558.4px;top:250.4px;width:173px;height:38px;background:linear-gradient(#dbe3eb,#bccad7);border:2px solid;border-color:#9e9e9e #333 #333 #9e9e9e;box-sizing:border-box;"></div>
<div class="a" style="left:562.4px;top:282.9px;width:165px;height:0;border-top:1px dotted #8fb0d0;"></div>
<div class="t" style="left:571.50px;top:257.00px;font-size:20px;color:#8793a2;font-weight:normal;letter-spacing:-0.309px;">Payment Type</div>
<div class="t" style="left:705.90px;top:257.00px;font-size:20px;color:#555;font-weight:bold;letter-spacing:0px;">x</div>
<div class="a" style="left:428px;top:305px;width:1482px;height:277px;overflow:hidden;background:#f0f0f0;">
<div class="a" style="left:0;top:0;width:1484px;height:3px;background:#7c7c7c;"></div>
<div class="a" style="left:0;top:0;width:3px;height:279px;background:#7c7c7c;"></div>
<div class="a" style="left:3px;top:3px;width:1600px;height:69px;background:linear-gradient(#dde5ee,#b8c7d6);"></div>
<div class="a" style="left:3px;top:72px;width:174px;height:300px;background:#edf1f6;"></div>
<div class="a" style="left:178px;top:72px;width:1500px;height:42px;background:#fff;"></div>
<div class="a" style="left:178px;top:114px;width:1500px;height:43.60000000000002px;background:#f4f7fa;"></div>
<div class="a" style="left:178px;top:157.60000000000002px;width:1500px;height:42.0px;background:#fff;"></div>
<div class="a" style="left:178px;top:199.60000000000002px;width:1500px;height:44.39999999999998px;background:#f4f7fa;"></div>
<div class="a" style="left:178px;top:244px;width:1500px;height:51px;background:#fff;"></div>
<div class="a" style="left:3px;top:71px;width:1600px;height:2px;background:#9c9c9c;"></div>
<div class="a" style="left:3px;top:113px;width:174px;height:2px;background:#9c9c9c;"></div>
<div class="a" style="left:178px;top:113px;width:1500px;height:2px;background:#cdcdcd;"></div>
<div class="a" style="left:3px;top:156.60000000000002px;width:174px;height:2px;background:#9c9c9c;"></div>
<div class="a" style="left:178px;top:156.60000000000002px;width:1500px;height:2px;background:#cdcdcd;"></div>
<div class="a" style="left:3px;top:198.60000000000002px;width:174px;height:2px;background:#9c9c9c;"></div>
<div class="a" style="left:178px;top:198.60000000000002px;width:1500px;height:2px;background:#cdcdcd;"></div>
<div class="a" style="left:3px;top:243px;width:174px;height:2px;background:#9c9c9c;"></div>
<div class="a" style="left:178px;top:243px;width:1500px;height:2px;background:#cdcdcd;"></div>
<div class="a" style="left:176px;top:73px;width:2px;height:300px;background:#9c9c9c;"></div>
<div class="a" style="left:176px;top:3px;width:2px;height:69px;background:#9c9c9c;"></div>
<div class="a" style="left:328px;top:73px;width:2px;height:300px;background:#c8c8c8;"></div>
<div class="a" style="left:328px;top:3px;width:2px;height:69px;background:#9c9c9c;"></div>
<div class="a" style="left:474px;top:73px;width:2px;height:300px;background:#c8c8c8;"></div>
<div class="a" style="left:474px;top:3px;width:2px;height:69px;background:#9c9c9c;"></div>
<div class="a" style="left:582px;top:73px;width:2px;height:300px;background:#c8c8c8;"></div>
<div class="a" style="left:582px;top:3px;width:2px;height:69px;background:#9c9c9c;"></div>
<div class="a" style="left:720px;top:73px;width:2px;height:300px;background:#c8c8c8;"></div>
<div class="a" style="left:720px;top:3px;width:2px;height:69px;background:#9c9c9c;"></div>
<div class="a" style="left:852px;top:73px;width:2px;height:300px;background:#c8c8c8;"></div>
<div class="a" style="left:852px;top:3px;width:2px;height:69px;background:#9c9c9c;"></div>
<div class="a" style="left:990px;top:73px;width:2px;height:300px;background:#c8c8c8;"></div>
<div class="a" style="left:990px;top:3px;width:2px;height:69px;background:#9c9c9c;"></div>
<div class="a" style="left:1100px;top:73px;width:2px;height:300px;background:#c8c8c8;"></div>
<div class="a" style="left:1100px;top:3px;width:2px;height:69px;background:#9c9c9c;"></div>
<div class="a" style="left:1238px;top:73px;width:2px;height:300px;background:#c8c8c8;"></div>
<div class="a" style="left:1238px;top:3px;width:2px;height:69px;background:#9c9c9c;"></div>
<div class="a" style="left:1380px;top:73px;width:2px;height:300px;background:#c8c8c8;"></div>
<div class="a" style="left:1380px;top:3px;width:2px;height:69px;background:#9c9c9c;"></div>
<div class="a" style="left:1518px;top:73px;width:2px;height:300px;background:#c8c8c8;"></div>
<div class="a" style="left:1518px;top:3px;width:2px;height:69px;background:#9c9c9c;"></div>
</div>
<div class="a" style="left:1910px;top:305px;width:2px;height:279px;background:#d4d0c8;"></div>
<div class="a" style="left:428px;top:582px;width:1484px;height:2px;background:#d4d0c8;"></div>
<div class="a" style="left:428px;top:305px;width:1482px;height:277px;overflow:hidden;"><div class="a" style="left:-428px;top:-305px;width:1920px;height:1080px;">
<div class="t" style="left:443.40px;top:328.00px;font-size:22px;color:#000;font-weight:bold;letter-spacing:0.433px;">Borough</div>
<div class="t" style="left:618.40px;top:316.00px;font-size:22px;color:#000;font-weight:bold;letter-spacing:0.51px;">Credit Card</div>
<div class="t" style="left:640.60px;top:349.00px;font-size:18px;color:#5c5c5c;font-weight:normal;letter-spacing:-0.189px;">Trip Count</div>
<div class="t" style="left:774.50px;top:333.00px;font-size:18px;color:#5c5c5c;font-weight:normal;letter-spacing:-0.308px;">Total Revenue</div>
<div class="t" style="left:929.90px;top:316.00px;font-size:22px;color:#000;font-weight:bold;letter-spacing:0.367px;">Cash</div>
<div class="t" style="left:916.90px;top:349.00px;font-size:18px;color:#5c5c5c;font-weight:normal;letter-spacing:-0.2px;">Trip Count</div>
<div class="t" style="left:1025.00px;top:333.00px;font-size:18px;color:#5c5c5c;font-weight:normal;letter-spacing:-0.333px;">Total Revenue</div>
<div class="t" style="left:1161.50px;top:316.00px;font-size:22px;color:#000;font-weight:bold;letter-spacing:1.125px;">Unknown</div>
<div class="t" style="left:1175.00px;top:349.00px;font-size:18px;color:#5c5c5c;font-weight:normal;letter-spacing:-0.267px;">Trip Count</div>
<div class="t" style="left:1293.75px;top:333.00px;font-size:18px;color:#5c5c5c;font-weight:normal;letter-spacing:-0.337px;">Total Revenue</div>
<div class="t" style="left:1430.90px;top:316.00px;font-size:22px;color:#000;font-weight:bold;letter-spacing:0.683px;">Dispute</div>
<div class="t" style="left:1433.75px;top:349.00px;font-size:18px;color:#5c5c5c;font-weight:normal;letter-spacing:-0.306px;">Trip Count</div>
<div class="t" style="left:1542.20px;top:333.00px;font-size:18px;color:#5c5c5c;font-weight:normal;letter-spacing:-0.342px;">Total Revenue</div>
<div class="t" style="left:1679.50px;top:316.00px;font-size:22px;color:#000;font-weight:bold;letter-spacing:0.55px;">No Charge</div>
<div class="t" style="left:1694.70px;top:349.00px;font-size:18px;color:#5c5c5c;font-weight:normal;letter-spacing:0.011px;">Trip Count</div>
<div class="t" style="left:1821.60px;top:333.00px;font-size:18px;color:#5c5c5c;font-weight:normal;letter-spacing:-0.325px;">Total Revenue</div>
<div class="t" style="left:443.60px;top:386.00px;font-size:22px;color:#000;font-weight:bold;letter-spacing:1.25px;">Manhattan</div>
<div class="t" style="right:1176.5px;top:386.00px;font-size:22px;color:#000;font-weight:normal;">2,165,078</div>
<div class="t" style="right:1030.5px;top:386.00px;font-size:22px;color:#000;font-weight:normal;">$41,233,330</div>
<div class="t" style="right:922.5px;top:386.00px;font-size:22px;color:#000;font-weight:normal;">503,084</div>
<div class="t" style="right:784.5px;top:386.00px;font-size:22px;color:#000;font-weight:normal;">$7,696,114</div>
<div class="t" style="right:652.5px;top:386.00px;font-size:22px;color:#000;font-weight:normal;">101,602</div>
<div class="t" style="right:514.5px;top:386.00px;font-size:22px;color:#000;font-weight:normal;">$2,792,042</div>
<div class="t" style="right:404.5px;top:386.00px;font-size:22px;color:#000;font-weight:normal;">25,754</div>
<div class="t" style="right:266.5px;top:386.00px;font-size:22px;color:#000;font-weight:normal;">$36,691</div>
<div class="t" style="right:124.5px;top:386.00px;font-size:22px;color:#000;font-weight:normal;">12,742</div>
<div class="t" style="right:-13.5px;top:386.00px;font-size:22px;color:#000;font-weight:normal;">$92,518</div>
<div class="t" style="left:443.60px;top:428.00px;font-size:22px;color:#000;font-weight:bold;letter-spacing:0.5px;">Queens</div>
<div class="t" style="right:1176.5px;top:428.00px;font-size:22px;color:#000;font-weight:normal;">196,821</div>
<div class="t" style="right:1030.5px;top:428.00px;font-size:22px;color:#000;font-weight:normal;">$11,769,263</div>
<div class="t" style="right:922.5px;top:428.00px;font-size:22px;color:#000;font-weight:normal;">59,849</div>
<div class="t" style="right:784.5px;top:428.00px;font-size:22px;color:#000;font-weight:normal;">$2,486,938</div>
<div class="t" style="right:652.5px;top:428.00px;font-size:22px;color:#000;font-weight:normal;">1,103</div>
<div class="t" style="right:514.5px;top:428.00px;font-size:22px;color:#000;font-weight:normal;">$57,922</div>
<div class="t" style="right:404.5px;top:428.00px;font-size:22px;color:#000;font-weight:normal;">3,399</div>
<div class="t" style="right:266.5px;top:428.00px;font-size:22px;color:#000;font-weight:normal;">$9,733</div>
<div class="t" style="right:124.5px;top:428.00px;font-size:22px;color:#000;font-weight:normal;">2,175</div>
<div class="t" style="right:-13.5px;top:428.00px;font-size:22px;color:#000;font-weight:normal;">$29,914</div>
<div class="t" style="left:443.60px;top:471.00px;font-size:22px;color:#000;font-weight:bold;letter-spacing:0.925px;">Other</div>
<div class="t" style="right:1176.5px;top:471.00px;font-size:22px;color:#000;font-weight:normal;">117,296</div>
<div class="t" style="right:1030.5px;top:471.00px;font-size:22px;color:#000;font-weight:normal;">$3,981,758</div>
<div class="t" style="right:922.5px;top:471.00px;font-size:22px;color:#000;font-weight:normal;">33,775</div>
<div class="t" style="right:784.5px;top:471.00px;font-size:22px;color:#000;font-weight:normal;">$710,022</div>
<div class="t" style="right:652.5px;top:471.00px;font-size:22px;color:#000;font-weight:normal;">16,786</div>
<div class="t" style="right:514.5px;top:471.00px;font-size:22px;color:#000;font-weight:normal;">$640,538</div>
<div class="t" style="right:404.5px;top:471.00px;font-size:22px;color:#000;font-weight:normal;">2,088</div>
<div class="t" style="right:266.5px;top:471.00px;font-size:22px;color:#000;font-weight:normal;">$4,400</div>
<div class="t" style="right:124.5px;top:471.00px;font-size:22px;color:#000;font-weight:normal;">2,760</div>
<div class="t" style="right:-13.5px;top:471.00px;font-size:22px;color:#000;font-weight:normal;">$11,806</div>
<div class="t" style="left:443.60px;top:514.00px;font-size:22px;color:#000;font-weight:bold;letter-spacing:0.586px;">Brooklyn</div>
<div class="t" style="right:1176.5px;top:514.00px;font-size:22px;color:#000;font-weight:normal;">3,622</div>
<div class="t" style="right:1030.5px;top:514.00px;font-size:22px;color:#000;font-weight:normal;">$102,088</div>
<div class="t" style="right:922.5px;top:514.00px;font-size:22px;color:#000;font-weight:normal;">1,057</div>
<div class="t" style="right:784.5px;top:514.00px;font-size:22px;color:#000;font-weight:normal;">$19,890</div>
<div class="t" style="right:652.5px;top:514.00px;font-size:22px;color:#000;font-weight:normal;">2,227</div>
<div class="t" style="right:514.5px;top:514.00px;font-size:22px;color:#000;font-weight:normal;">$75,074</div>
<div class="t" style="right:404.5px;top:514.00px;font-size:22px;color:#000;font-weight:normal;">75</div>
<div class="t" style="right:266.5px;top:514.00px;font-size:22px;color:#000;font-weight:normal;">$135</div>
<div class="t" style="right:124.5px;top:514.00px;font-size:22px;color:#000;font-weight:normal;">89</div>
<div class="t" style="right:-13.5px;top:514.00px;font-size:22px;color:#000;font-weight:normal;">$346</div>
<div class="t" style="left:443.60px;top:557.00px;font-size:22px;color:#000;font-weight:bold;letter-spacing:0.625px;">Bronx</div>
<div class="t" style="right:1176.5px;top:557.00px;font-size:22px;color:#000;font-weight:normal;">511</div>
<div class="t" style="right:1030.5px;top:557.00px;font-size:22px;color:#000;font-weight:normal;">$16,353</div>
<div class="t" style="right:922.5px;top:557.00px;font-size:22px;color:#000;font-weight:normal;">272</div>
<div class="t" style="right:784.5px;top:557.00px;font-size:22px;color:#000;font-weight:normal;">$4,956</div>
<div class="t" style="right:652.5px;top:557.00px;font-size:22px;color:#000;font-weight:normal;">109</div>
<div class="t" style="right:514.5px;top:557.00px;font-size:22px;color:#000;font-weight:normal;">$3,353</div>
<div class="t" style="right:404.5px;top:557.00px;font-size:22px;color:#000;font-weight:normal;">18</div>
<div class="t" style="right:266.5px;top:557.00px;font-size:22px;color:#000;font-weight:normal;">$71</div>
<div class="t" style="right:124.5px;top:557.00px;font-size:22px;color:#000;font-weight:normal;">23</div>
<div class="t" style="right:-13.5px;top:557.00px;font-size:22px;color:#000;font-weight:normal;">$222</div>
</div></div>
<div class="a" style="left:428px;top:592px;width:1484px;height:50px;background:linear-gradient(#f7f6f2,#e9e7e0 60%,#dcd9d0);"></div>
<div class="a" style="left:428px;top:592px;width:1484px;height:2px;background:#b1ada1;"></div>
<div class="a" style="left:428px;top:640px;width:1484px;height:2px;background:#b1ada1;"></div>
<div class="t" style="left:439.30px;top:605.00px;font-size:21.5px;color:#404040;font-weight:normal;letter-spacing:0.34px;">Chart:</div>
<div class="a" style="left:512px;top:598px;width:194px;height:38px;background:#fff;border:2px solid;border-color:#727272 #d4d4d4 #d4d4d4 #727272;box-sizing:border-box;"></div>
<div class="t" style="left:529.60px;top:606.00px;font-size:21.5px;color:#000;font-weight:normal;letter-spacing:0.037px;">Bar Chart</div>
<svg class="a" style="left:678px;top:609px" width="21" height="15" viewBox="0 0 21 15"><path d="M2.2 2.6 L10.4 10.8 L18.6 2.6" fill="none" stroke="#000" stroke-width="3.5"/></svg>
<div class="t" style="left:717.10px;top:605.00px;font-size:21.5px;color:#404040;font-weight:normal;letter-spacing:0.043px;">Measure:</div>
<div class="a" style="left:820px;top:598px;width:234px;height:38px;background:#fff;border:2px solid;border-color:#727272 #d4d4d4 #d4d4d4 #727272;box-sizing:border-box;"></div>
<div class="t" style="left:838.20px;top:606.00px;font-size:21.5px;color:#000;font-weight:normal;letter-spacing:-0.078px;">Trip Count</div>
<svg class="a" style="left:1026px;top:609px" width="21" height="15" viewBox="0 0 21 15"><path d="M2.2 2.6 L10.4 10.8 L18.6 2.6" fill="none" stroke="#000" stroke-width="3.5"/></svg>
<div class="a" style="left:428px;top:642px;width:1484px;height:390px;background:#f7f7f7;"></div>
<svg class="a" style="left:0;top:0" width="1920" height="1080" viewBox="0 0 1920 1080">
<line x1="566" y1="652" x2="1894" y2="652" stroke="#d9d9d9" stroke-width="2" stroke-dasharray="6,6"/>
<line x1="566" y1="724.4" x2="1894" y2="724.4" stroke="#d9d9d9" stroke-width="2" stroke-dasharray="6,6"/>
<line x1="566" y1="796.9" x2="1894" y2="796.9" stroke="#d9d9d9" stroke-width="2" stroke-dasharray="6,6"/>
<line x1="566" y1="869.3" x2="1894" y2="869.3" stroke="#d9d9d9" stroke-width="2" stroke-dasharray="6,6"/>
<line x1="676.6666666666666" y1="652" x2="676.6666666666666" y2="941" stroke="#d9d9d9" stroke-width="2" stroke-dasharray="6,6"/>
<line x1="898.0" y1="652" x2="898.0" y2="941" stroke="#d9d9d9" stroke-width="2" stroke-dasharray="6,6"/>
<line x1="1119.3333333333335" y1="652" x2="1119.3333333333335" y2="941" stroke="#d9d9d9" stroke-width="2" stroke-dasharray="6,6"/>
<line x1="1340.6666666666667" y1="652" x2="1340.6666666666667" y2="941" stroke="#d9d9d9" stroke-width="2" stroke-dasharray="6,6"/>
<line x1="1562.0" y1="652" x2="1562.0" y2="941" stroke="#d9d9d9" stroke-width="2" stroke-dasharray="6,6"/>
<line x1="1783.3333333333335" y1="652" x2="1783.3333333333335" y2="941" stroke="#d9d9d9" stroke-width="2" stroke-dasharray="6,6"/>
<line x1="1894" y1="652" x2="1894" y2="941" stroke="#d9d9d9" stroke-width="2" stroke-dasharray="6,6"/>
<rect x="588.6666666666666" y="670.4709533333333" width="176" height="270.52904666666666" fill="#3c6ea5"/>
<rect x="810.0" y="915.6309056666666" width="176" height="25.369094333333333" fill="#3c6ea5"/>
<rect x="1031.3333333333335" y="924.3627516666667" width="176" height="16.637248333333332" fill="#3c6ea5"/>
<rect x="1252.6666666666667" y="940.3189233333334" width="176" height="0.6810766666666667" fill="#3c6ea5"/>
<rect x="1474.0" y="940.910121" width="176" height="0.089879" fill="#3c6ea5"/>
<rect x="1695.3333333333335" y="940.98844" width="176" height="0.01156" fill="#3c6ea5"/>
<line x1="566" y1="652" x2="566" y2="942" stroke="#555" stroke-width="2"/>
<line x1="566" y1="942" x2="1894" y2="942" stroke="#555" stroke-width="2"/>
<line x1="554" y1="652" x2="566" y2="652" stroke="#555" stroke-width="2"/>
<text x="549.5" y="662" text-anchor="end" font-size="17" fill="#555">3.0M</text>
<line x1="554" y1="724.4" x2="566" y2="724.4" stroke="#555" stroke-width="2"/>
<text x="549.5" y="730.4" text-anchor="end" font-size="17" fill="#555">2.3M</text>
<line x1="554" y1="796.9" x2="566" y2="796.9" stroke="#555" stroke-width="2"/>
<text x="549.5" y="802.9" text-anchor="end" font-size="17" fill="#555">1.5M</text>
<line x1="554" y1="869.3" x2="566" y2="869.3" stroke="#555" stroke-width="2"/>
<text x="549.5" y="875.3" text-anchor="end" font-size="17" fill="#555">750K</text>
<line x1="554" y1="941" x2="566" y2="941" stroke="#555" stroke-width="2"/>
<text x="549.5" y="947" text-anchor="end" font-size="17" fill="#555">0</text>
<line x1="676.6666666666666" y1="942" x2="676.6666666666666" y2="954" stroke="#555" stroke-width="2"/>
<text transform="translate(679.6666666666666,969) rotate(-20)" text-anchor="end" font-size="17.2" fill="#555">Manhattan</text>
<line x1="898.0" y1="942" x2="898.0" y2="954" stroke="#555" stroke-width="2"/>
<text transform="translate(901.0,969) rotate(-20)" text-anchor="end" font-size="17.2" fill="#555">Queens</text>
<line x1="1119.3333333333335" y1="942" x2="1119.3333333333335" y2="954" stroke="#555" stroke-width="2"/>
<text transform="translate(1122.3333333333335,969) rotate(-20)" text-anchor="end" font-size="17.2" fill="#555">Other</text>
<line x1="1340.6666666666667" y1="942" x2="1340.6666666666667" y2="954" stroke="#555" stroke-width="2"/>
<text transform="translate(1343.6666666666667,969) rotate(-20)" text-anchor="end" font-size="17.2" fill="#555">Brooklyn</text>
<line x1="1562.0" y1="942" x2="1562.0" y2="954" stroke="#555" stroke-width="2"/>
<text transform="translate(1565.0,969) rotate(-20)" text-anchor="end" font-size="17.2" fill="#555">Bronx</text>
<line x1="1783.3333333333335" y1="942" x2="1783.3333333333335" y2="954" stroke="#555" stroke-width="2"/>
<text transform="translate(1786.3333333333335,969) rotate(-20)" text-anchor="end" font-size="17.2" fill="#555">Staten Island</text>
</svg>
<div class="a" style="left:0px;top:1032px;width:1920px;height:48px;background:#ece9d8;"></div>
<div class="a" style="left:0px;top:1032px;width:1920px;height:1px;background:#fff;"></div>
<div class="a" style="left:12px;top:1038px;width:82px;height:37px;border:2px solid;border-color:#7b7b7b #d6d3ca #d6d3ca #7b7b7b;box-sizing:border-box;"></div>
<div class="t" style="left:25.11px;top:1045.00px;font-size:21.5px;color:#222;font-weight:normal;letter-spacing:0px;transform:scaleX(0.8852);transform-origin:0 0;">Ready</div>
<div class="a" style="left:102px;top:1038px;width:228px;height:37px;border:2px solid;border-color:#7b7b7b #d6d3ca #d6d3ca #7b7b7b;box-sizing:border-box;"></div>
<div class="t" style="left:115.07px;top:1045.00px;font-size:21.5px;color:#222;font-weight:normal;letter-spacing:0px;transform:scaleX(0.9302);transform-origin:0 0;">3,252,717 facts loaded</div>
<div class="a" style="left:338px;top:1038px;width:254px;height:37px;border:2px solid;border-color:#7b7b7b #d6d3ca #d6d3ca #7b7b7b;box-sizing:border-box;"></div>
<div class="t" style="left:351.79px;top:1045.00px;font-size:21.5px;color:#222;font-weight:normal;letter-spacing:0px;transform:scaleX(0.9060);transform-origin:0 0;">Cube: NYC Taxi Nov 2022</div>
<div class="a" style="left:1522px;top:1038px;width:386px;height:37px;border:2px solid;border-color:#7b7b7b #d6d3ca #d6d3ca #7b7b7b;box-sizing:border-box;"></div>
<div class="t" style="left:1535.38px;top:1045.00px;font-size:21.5px;color:#222;font-weight:normal;letter-spacing:0px;transform:scaleX(0.9198);transform-origin:0 0;">Slapshot OLAP v1.0.3 | Build 2003.04.01</div>
</body></html>
